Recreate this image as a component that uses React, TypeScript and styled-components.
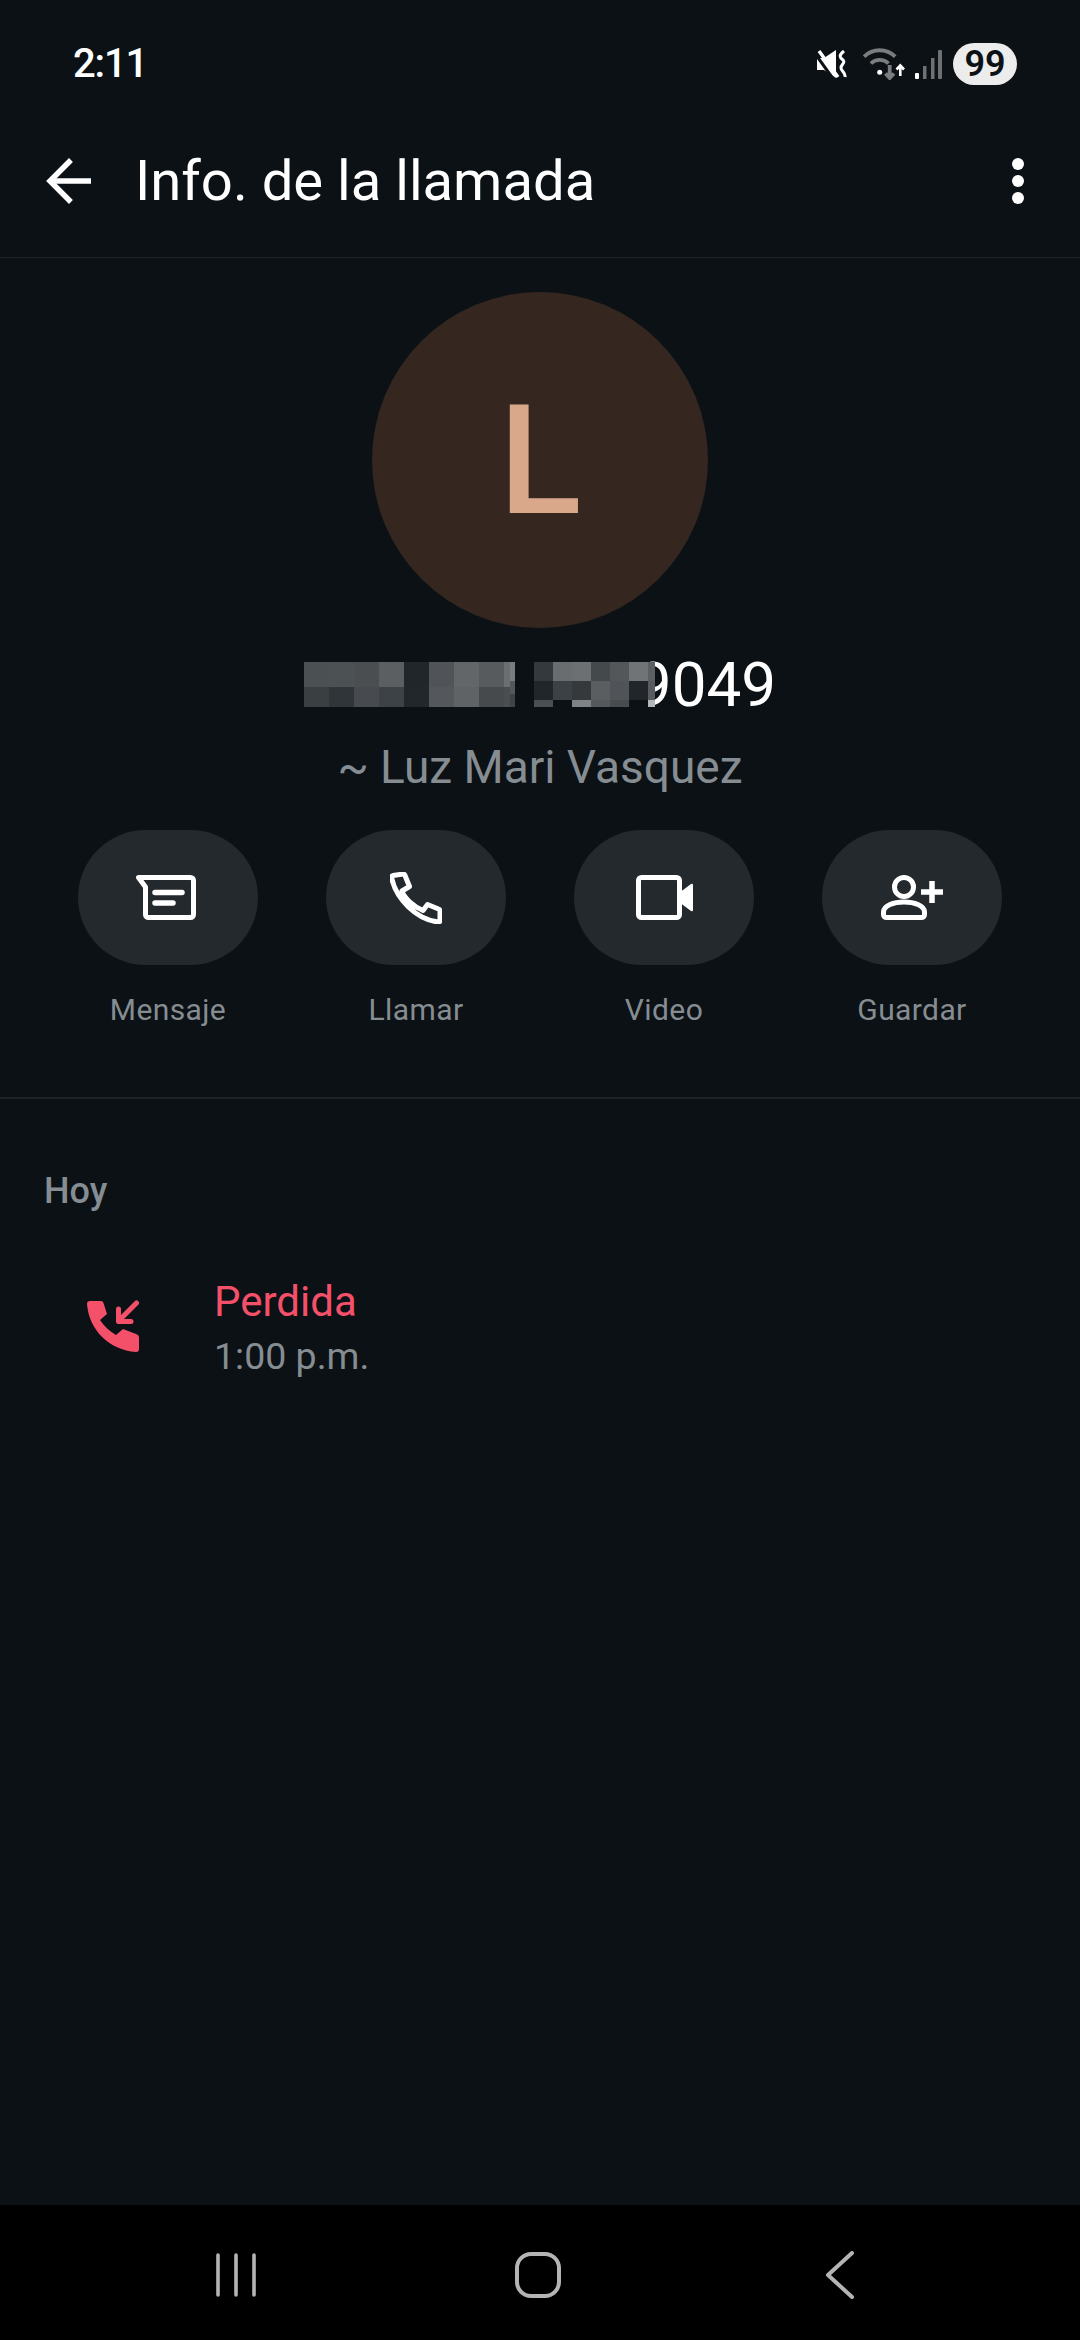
import styled, { createGlobalStyle } from "styled-components";

const BG = "#0b1115";
const MUTED = "#868d92";
const MISSED = "#f4506a";

const GlobalStyle = createGlobalStyle`
  html, body {
    margin: 0;
    padding: 0;
    background: ${BG};
  }
  * {
    box-sizing: border-box;
  }
`;

const Page = styled.div`
  display: flex;
  flex-direction: column;
  width: 1080px;
  height: 2340px;
  background: ${BG};
  font-family: Roboto, "Noto Sans", sans-serif;
  overflow: hidden;
`;

const StatusBar = styled.div`
  display: flex;
  align-items: center;
  height: 105px;
  padding: 43px 63px 20px 73px;
`;

const Clock = styled.span`
  font-size: 40px;
  font-weight: 500;
  letter-spacing: -1.2px;
  line-height: 42px;
  color: #ffffff;
`;

const StatusIcons = styled.div`
  display: flex;
  align-items: center;
  margin-left: auto;
`;

const Battery = styled.span`
  display: flex;
  align-items: center;
  justify-content: center;
  width: 64px;
  height: 42px;
  margin-left: 11px;
  border-radius: 21px;
  background: #ececec;
  color: ${BG};
  font-size: 36px;
  font-weight: 600;
`;

const Toolbar = styled.header`
  display: flex;
  align-items: center;
  height: 153px;
  padding: 0 55px 0 42px;
  border-bottom: 1px solid #1d2327;
`;

const Title = styled.h1`
  margin: 0 0 0 43px;
  font-size: 56.2px;
  font-weight: 400;
  color: #ffffff;
`;

const MoreButton = styled.svg`
  margin-left: auto;
`;

const Profile = styled.section`
  display: flex;
  flex-direction: column;
  align-items: center;
`;

const Avatar = styled.div`
  display: flex;
  align-items: center;
  justify-content: center;
  width: 336px;
  height: 336px;
  margin: 34px 0 0 0;
  border-radius: 50%;
  background: #35271f;
  color: #d9a88a;
  font-size: 153px;
  font-weight: 500;
  line-height: 1;
`;

const NameRow = styled.div`
  display: flex;
  align-items: flex-start;
  height: 70px;
  margin: 22px 0 0 0;
`;

const Mosaic = styled.div<{ $gap?: number }>`
  position: relative;
  z-index: 1;
  display: flex;
  margin: 12px ${(p) => p.$gap ?? 0}px 0 0;
`;

const MosaicColumn = styled.div`
  display: flex;
  flex-direction: column;
`;

const MosaicCell = styled.span<{ $w: number; $h: number; $c: string }>`
  display: block;
  width: ${(p) => p.$w}px;
  height: ${(p) => p.$h}px;
  background: ${(p) => p.$c};
`;

const PhoneTail = styled.span`
  margin-left: -18px;
  font-size: 62px;
  line-height: 70px;
  color: #ffffff;
`;

const Alias = styled.div`
  margin-top: 22px;
  font-size: 46px;
  line-height: 50px;
  color: ${MUTED};
`;

const Actions = styled.div`
  display: grid;
  grid-template-columns: repeat(4, 248px);
  width: 100%;
  margin-top: 38px;
  padding: 0 44px;
`;

const Action = styled.div`
  display: flex;
  flex-direction: column;
  align-items: center;
`;

const ActionPill = styled.div`
  display: flex;
  align-items: center;
  justify-content: center;
  width: 180px;
  height: 135px;
  border-radius: 68px;
  background: #24292d;
`;

const ActionLabel = styled.span`
  margin-top: 27px;
  font-size: 30px;
  line-height: 36px;
  letter-spacing: 0.4px;
  color: ${MUTED};
`;

const Divider = styled.hr`
  width: 100%;
  height: 2px;
  margin: 69px 0 0;
  border: 0;
  background: #1c2226;
`;

const History = styled.section`
  flex: 1;
  padding: 72px 0 0 44px;
`;

const DayLabel = styled.h2`
  margin: 0;
  font-size: 36px;
  font-weight: 500;
  line-height: 40px;
  color: ${MUTED};
`;

const CallRow = styled.div`
  display: flex;
  align-items: flex-start;
  margin-top: 66px;
  padding-left: 43px;
`;

const CallIcon = styled.svg`
  margin-top: 23px;
`;

const CallText = styled.div`
  display: flex;
  flex-direction: column;
  margin-left: 75px;
`;

const CallStatus = styled.span`
  font-size: 42px;
  line-height: 50px;
  color: ${MISSED};
`;

const CallTime = styled.span`
  margin-top: 6px;
  font-size: 37.5px;
  line-height: 46px;
  color: ${MUTED};
`;

const NavBar = styled.nav`
  display: flex;
  align-items: center;
  justify-content: center;
  height: 135px;
  padding: 5px 4px 0 0;
  background: #000000;
`;

const NavSlot = styled.div`
  display: flex;
  justify-content: center;
  width: 302px;
`;

type Cell = [number, string];
type Col = { w: number; cells: Cell[] };

const col = (w: number, ...cells: Cell[]): Col => ({ w, cells });

const mosaicA: Col[] = [
  col(25, [25, "#4b5053"], [20, "#3a3f42"]),
  col(25, [25, "#4c5154"], [20, "#2f3538"]),
  col(25, [25, "#4a4e51"], [20, "#474b4f"]),
  col(25, [25, "#5b5f62"], [20, "#3d4246"]),
  col(25, [25, "#20262a"], [20, "#21272b"]),
  col(25, [25, "#505458"], [20, "#54585c"]),
  col(25, [25, "#626669"], [20, "#5f6366"]),
  col(25, [25, "#575b5e"], [20, "#464a4d"]),
  col(6, [25, "#6a6e70"], [20, "#4a4e51"]),
  col(5, [19, "#797d7f"], [13, "#54585a"], [13, "#3f4448"]),
];

const mosaicB: Col[] = [
  col(19, [19, "#33393c"], [19, "#20262a"], [7, "#4a4f52"]),
  col(19, [19, "#696d70"], [19, "#3c4145"], [7, BG]),
  col(19, [19, "#6c7073"], [19, "#35393c"], [7, "#7f8386"]),
  col(19, [19, "#44494c"], [19, "#5a5e61"], [7, "#56595c"]),
  col(19, [19, "#53575a"], [19, "#505458"], [7, "#484c4f"]),
  col(19, [19, "#707477"], [19, "#20262a"], [7, BG]),
  col(7, [19, "#5c6063"], [19, "#585c5f"], [7, "#b4b7b9"]),
];

const MosaicBlock = ({ cols, gap }: { cols: Col[]; gap?: number }) => (
  <Mosaic $gap={gap}>
    {cols.map((c, i) => (
      <MosaicColumn key={i}>
        {c.cells.map(([h, color], j) => (
          <MosaicCell key={j} $w={c.w} $h={h} $c={color} />
        ))}
      </MosaicColumn>
    ))}
  </Mosaic>
);

const MuteIcon = () => (
  <svg width="30" height="28" viewBox="0 0 30 28">
    <path d="M0 8H7L19 0V28L7 20H0Z" fill="#fff" />
    <path d="M-1 5L17 30" stroke={BG} strokeWidth="3" />
    <path d="M2 1L21 27" stroke="#fff" strokeWidth="3.4" />
    <path d="M27 1C22 5 22 7 26 10C29 13 24 14 24 18C24 21 29 23 28 27" fill="none" stroke="#fff" strokeWidth="3" />
  </svg>
);

const WifiIcon = () => (
  <svg width="44" height="32" viewBox="0 0 44 32" style={{ marginLeft: 14 }}>
    <g fill="none" stroke="#7a7c7e" strokeWidth="3.8">
      <path d="M3.1 8.7A22 22 0 0 1 34.2 8.7" />
      <path d="M9.9 15.5A12.5 12.5 0 0 1 27.5 15.5" />
      <path d="M28.7 17V30M24.5 25.5L28.7 30L33 25.5" />
    </g>
    <circle cx="18.7" cy="24.3" r="2.5" fill="#fff" />
    <path d="M39.3 28V18M35.5 21.5L39.3 17.5L43 21.5" fill="none" stroke="#fff" strokeWidth="2.6" />
  </svg>
);

const SignalIcon = () => (
  <svg width="27" height="29" viewBox="0 0 27 29" style={{ marginLeft: 10 }}>
    <rect x="0" y="23" width="4" height="6" rx="1" fill="#fff" />
    <rect x="8" y="16" width="3.5" height="13" fill="#6e7072" />
    <rect x="16" y="8" width="3.5" height="21" fill="#6e7072" />
    <rect x="23" y="0" width="4" height="29" rx="1" fill="#6e7072" />
  </svg>
);

const BackArrow = () => (
  <svg width="50" height="50" viewBox="0 0 50 50">
    <path d="M49 25H8" fill="none" stroke="#fff" strokeWidth="5.5" />
    <path d="M27 6L8 25L27 44" fill="none" stroke="#fff" strokeWidth="5.5" strokeLinecap="square" />
  </svg>
);

const MessageIcon = () => (
  <svg width="60" height="45" viewBox="0 0 60 45" style={{ marginRight: 4 }}>
    <path d="M2.5 2.5H54.5a3 3 0 0 1 3 3V39.5a3 3 0 0 1-3 3H12.5a3 3 0 0 1-3-3V12Z" fill="none" stroke="#fff" strokeWidth="5" strokeLinejoin="round" />
    <path d="M19 17.5H46M19 28H37" stroke="#fff" strokeWidth="5.5" strokeLinecap="round" />
  </svg>
);

const handset =
  "M3 3.5L13 2Q14.5 2 15 3.5L19.5 14.5L12 19C14 26 24 35 33 38.5L37.5 32.5L48.5 37Q50 37.5 50 39V48.5Q50 50 48 50C26 47 6 27 1.5 5.5Q1.5 4 3 3.5Z";

const PhoneIcon = () => (
  <svg width="52" height="52" viewBox="0 0 52 52">
    <path d={handset} fill="none" stroke="#fff" strokeWidth="5" strokeLinejoin="round" />
  </svg>
);

const VideoIcon = () => (
  <svg width="57" height="45" viewBox="0 0 57 45">
    <rect x="2.5" y="2.5" width="41" height="40" rx="3" fill="none" stroke="#fff" strokeWidth="5" />
    <path d="M43 18L55 9Q57 8 57 10V35Q57 37 55 36L43 27Z" fill="#fff" />
  </svg>
);

const SaveIcon = () => (
  <svg width="62" height="45" viewBox="0 0 62 45">
    <circle cx="23" cy="12" r="9.5" fill="none" stroke="#fff" strokeWidth="5" />
    <path d="M2.5 37C2.5 30.5 13 27 23 27C33 27 43.5 30.5 43.5 37V39.5a3 3 0 0 1-3 3H5.5a3 3 0 0 1-3-3Z" fill="none" stroke="#fff" strokeWidth="5" strokeLinejoin="round" />
    <path d="M40 17H62M51 6V28" stroke="#fff" strokeWidth="5.5" />
  </svg>
);

const actions = [
  { label: "Mensaje", icon: <MessageIcon /> },
  { label: "Llamar", icon: <PhoneIcon /> },
  { label: "Video", icon: <VideoIcon /> },
  { label: "Guardar", icon: <SaveIcon /> },
];

export default function App() {
  return (
    <Page>
      <GlobalStyle />
      <StatusBar>
        <Clock>2:11</Clock>
        <StatusIcons>
          <MuteIcon />
          <WifiIcon />
          <SignalIcon />
          <Battery>99</Battery>
        </StatusIcons>
      </StatusBar>

      <Toolbar>
        <BackArrow />
        <Title>Info. de la llamada</Title>
        <MoreButton width="14" height="46" viewBox="0 0 14 46">
          <circle cx="7" cy="6" r="6" fill="#fff" />
          <circle cx="7" cy="23" r="6" fill="#fff" />
          <circle cx="7" cy="40" r="6" fill="#fff" />
        </MoreButton>
      </Toolbar>

      <Profile>
        <Avatar>L</Avatar>
        <NameRow>
          <MosaicBlock cols={mosaicA} gap={19} />
          <MosaicBlock cols={mosaicB} />
          <PhoneTail>9049</PhoneTail>
        </NameRow>
        <Alias>~ Luz Mari Vasquez</Alias>
        <Actions>
          {actions.map((a) => (
            <Action key={a.label}>
              <ActionPill>{a.icon}</ActionPill>
              <ActionLabel>{a.label}</ActionLabel>
            </Action>
          ))}
        </Actions>
      </Profile>

      <Divider />

      <History>
        <DayLabel>Hoy</DayLabel>
        <CallRow>
          <CallIcon width="52" height="52" viewBox="0 0 52 52">
            <path d="M3 1H14Q16 1 16.5 3L20 14L13 20C17 26 22 31 29 35L36 29L49 34Q52 35 52 37V49Q52 52 49 52C22 50 2 30 0 4Q0 1 3 1Z" fill={MISSED} />
            <path d="M49.5 3L32 20.5M31.5 9V21.5H44" fill="none" stroke={MISSED} strokeWidth="5" strokeLinecap="round" strokeLinejoin="round" />
          </CallIcon>
          <CallText>
            <CallStatus>Perdida</CallStatus>
            <CallTime>1:00 p.m.</CallTime>
          </CallText>
        </CallRow>
      </History>

      <NavBar>
        <NavSlot>
          <svg width="42" height="44" viewBox="0 0 42 44">
            <path d="M3 2V42M21 2V42M39 2V42" stroke="#b4b4b4" strokeWidth="3.6" strokeLinecap="round" />
          </svg>
        </NavSlot>
        <NavSlot>
          <svg width="46" height="46" viewBox="0 0 46 46">
            <rect x="2" y="2" width="42" height="42" rx="14" fill="none" stroke="#b4b4b4" strokeWidth="4" />
          </svg>
        </NavSlot>
        <NavSlot>
          <svg width="30" height="48" viewBox="0 0 30 48">
            <path d="M27 2L3 24L27 46" fill="none" stroke="#b4b4b4" strokeWidth="4" strokeLinecap="round" strokeLinejoin="round" />
          </svg>
        </NavSlot>
      </NavBar>
    </Page>
  );
}
